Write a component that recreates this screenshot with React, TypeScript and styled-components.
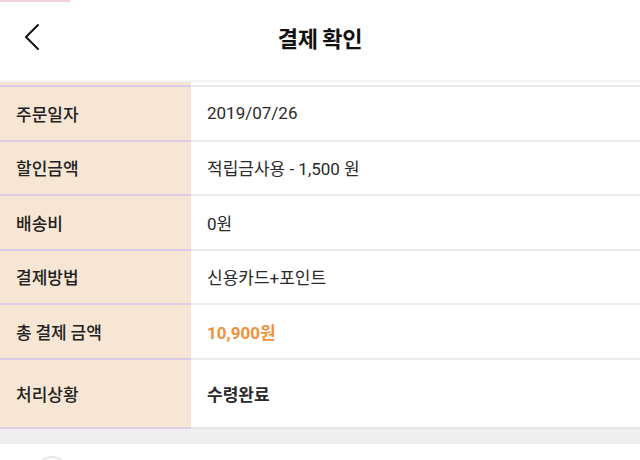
import { Fragment } from 'react';
import styled, { createGlobalStyle } from 'styled-components';

const GlobalStyle = createGlobalStyle`
  html, body {
    margin: 0;
    padding: 0;
    background: #ffffff;
    overflow: hidden;
  }
  body {
    font-family: Roboto, "Noto Sans CJK KR", sans-serif;
    color: #222222;
  }
`;

const Page = styled.div`
  width: 640px;
  height: 460px;
  overflow: hidden;
  display: flex;
  flex-direction: column;

  & > * {
    flex-shrink: 0;
  }
`;

const StatusMark = styled.div`
  width: 70px;
  height: 2px;
  background: #f4cfe0;
`;

const Header = styled.header`
  height: 78px;
  display: grid;
  grid-template-columns: 60px 1fr 60px;
  align-items: center;
  border-bottom: 2px solid #f3f3f3;
`;

const BackButton = styled.button`
  border: 0;
  background: none;
  padding: 0 0 0 24px;
  height: 100%;
  display: flex;
  align-items: center;
  cursor: pointer;
  margin-top: -8px;
`;

const Title = styled.h1`
  margin: 0 0 8px;
  text-align: center;
  font-family: "Noto Sans CJK KR", sans-serif;
  font-size: 22px;
  font-weight: 700;
  color: #111111;
  letter-spacing: -0.3px;
`;

const Table = styled.div`
  display: grid;
  grid-template-columns: 191px 1fr;
  padding-top: 3px;
  background: linear-gradient(to right, #f6e6d3 191px, #ffffff 191px);
`;

const Label = styled.div<{ $tall?: boolean }>`
  height: ${({ $tall }) => ($tall ? 67 : 52.5)}px;
  display: flex;
  align-items: center;
  padding-left: 16px;
  border-top: 2px solid #dccbe8;
  font-family: "Noto Sans CJK KR", sans-serif;
  font-size: 17px;
  font-weight: 500;
  color: #222222;
`;

const Value = styled.div<{ $tall?: boolean; $tone?: 'accent' | 'strong' }>`
  height: ${({ $tall }) => ($tall ? 67 : 52.5)}px;
  display: flex;
  align-items: center;
  padding-left: 16px;
  border-top: 2px solid #ececec;
  font-family: Roboto, "Noto Sans CJK KR", sans-serif;
  font-size: 17px;
  font-weight: ${({ $tone }) => ($tone ? 700 : 400)};
  color: ${({ $tone }) => ($tone === 'accent' ? '#f0923c' : '#2a2a2a')};
`;

const TableEnd = styled.div`
  height: 2px;
  background: linear-gradient(to right, #dccbe8 191px, #e6e6e6 191px);
`;

const Gap = styled.div`
  height: 15px;
  background: #efefef;
`;

const NextSection = styled.div`
  padding: 12px 0 0 36px;
`;

const Dot = styled.div`
  width: 28px;
  height: 28px;
  border-radius: 50%;
  border: 2px solid #e8e8e8;
`;

const ChevronLeft = () => (
  <svg width="20" height="28" viewBox="0 0 20 28" fill="none">
    <path d="M14 2 L2 14 L14 26" stroke="#111" strokeWidth="2" strokeLinecap="round" strokeLinejoin="round" />
  </svg>
);

type Row = { label: string; value: string; tone?: 'accent' | 'strong'; tall?: boolean };

const rows: Row[] = [
  { label: '주문일자', value: '2019/07/26' },
  { label: '할인금액', value: '적립금사용 - 1,500 원' },
  { label: '배송비', value: '0원' },
  { label: '결제방법', value: '신용카드+포인트' },
  { label: '총 결제 금액', value: '10,900원', tone: 'accent' },
  { label: '처리상황', value: '수령완료', tone: 'strong', tall: true },
];

const App = () => (
  <>
    <GlobalStyle />
    <Page>
      <StatusMark />
      <Header>
        <BackButton aria-label="back">
          <ChevronLeft />
        </BackButton>
        <Title>결제 확인</Title>
        <div />
      </Header>
      <Table>
        {rows.map((r) => (
          <Fragment key={r.label}>
            <Label $tall={r.tall}>{r.label}</Label>
            <Value $tall={r.tall} $tone={r.tone}>
              {r.value}
            </Value>
          </Fragment>
        ))}
      </Table>
      <TableEnd />
      <Gap />
      <NextSection>
        <Dot />
      </NextSection>
    </Page>
  </>
);

export default App;
